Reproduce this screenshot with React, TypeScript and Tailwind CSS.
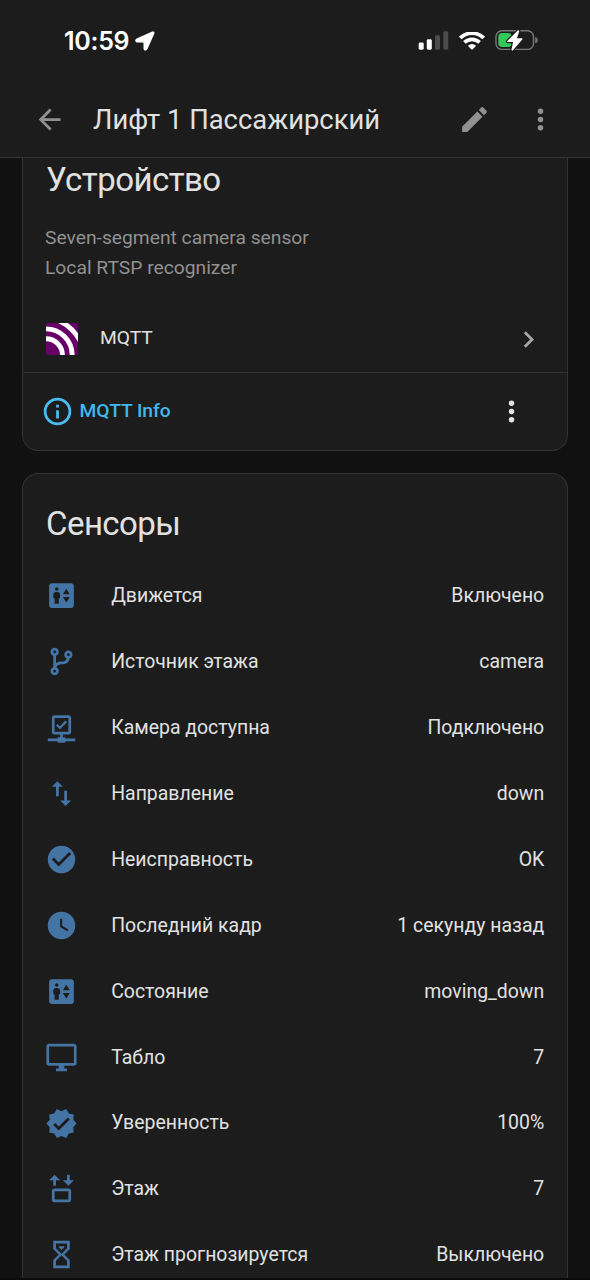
import React from "react";

const mdi = {
  back: "M20,11V13H8L13.5,18.5L12.08,19.92L4.16,12L12.08,4.08L13.5,5.5L8,11H20Z",
  pencil:
    "M20.71,7.04C21.1,6.65 21.1,6 20.71,5.63L18.37,3.29C18,2.9 17.35,2.9 16.96,3.29L15.12,5.12L18.87,8.87M3,17.25V21H6.75L17.81,9.93L14.06,6.18L3,17.25Z",
  dots: "M12,16A2,2 0 0,1 14,18A2,2 0 0,1 12,20A2,2 0 0,1 10,18A2,2 0 0,1 12,16M12,10A2,2 0 0,1 14,12A2,2 0 0,1 12,14A2,2 0 0,1 10,12A2,2 0 0,1 12,10M12,4A2,2 0 0,1 14,6A2,2 0 0,1 12,8A2,2 0 0,1 10,6A2,2 0 0,1 12,4Z",
  chevron: "M8.59,16.58L13.17,12L8.59,7.41L10,6L16,12L10,18L8.59,16.58Z",
  info: "M11,9H13V7H11M12,20C7.59,20 4,16.41 4,12C4,7.59 7.59,4 12,4C16.41,4 20,7.59 20,12C20,16.41 16.41,20 12,20M12,2A10,10 0 0,0 2,12A10,10 0 0,0 12,22A10,10 0 0,0 22,12A10,10 0 0,0 12,2M11,17H13V11H11V17Z",
  passenger:
    "M19 3H5C3.9 3 3 3.9 3 5V19C3 20.1 3.9 21 5 21H19C20.1 21 21 20.1 21 19V5C21 3.9 20.1 3 19 3M8.5 6C9.2 6 9.8 6.6 9.8 7.3S9.2 8.5 8.5 8.5 7.3 7.9 7.3 7.3 7.8 6 8.5 6M11 14H10V18H7V14H6V11.5C6 10.4 6.9 9.5 8 9.5H9C10.1 9.5 11 10.4 11 11.5V14M15.5 17L13 13H18L15.5 17M13 11L15.5 7L18 11H13Z",
  branch:
    "M13,14C9.64,14 8.54,15.35 8.18,16.24C9.25,16.7 10,17.76 10,19A3,3 0 0,1 7,22A3,3 0 0,1 4,19C4,17.69 4.83,16.58 6,16.17V7.83C4.83,7.42 4,6.31 4,5A3,3 0 0,1 7,2A3,3 0 0,1 10,5C10,6.31 9.17,7.42 8,7.83V13.12C8.88,12.47 10.16,12 12,12C14.67,12 15.56,10.66 15.85,9.77C14.77,9.32 14,8.25 14,7A3,3 0 0,1 17,4A3,3 0 0,1 20,7C20,8.34 19.12,9.5 17.91,9.86C17.65,11.29 16.68,14 13,14M7,18A1,1 0 0,0 6,19A1,1 0 0,0 7,20A1,1 0 0,0 8,19A1,1 0 0,0 7,18M7,4A1,1 0 0,0 6,5A1,1 0 0,0 7,6A1,1 0 0,0 8,5A1,1 0 0,0 7,4M17,6A1,1 0 0,0 16,7A1,1 0 0,0 17,8A1,1 0 0,0 18,7A1,1 0 0,0 17,6Z",
  network:
    "M15,20A1,1 0 0,0 14,19H13V17H17A2,2 0 0,0 19,15V5A2,2 0 0,0 17,3H7A2,2 0 0,0 5,5V15A2,2 0 0,0 7,17H11V19H10A1,1 0 0,0 9,20H2V22H9A1,1 0 0,0 10,23H14A1,1 0 0,0 15,22H22V20H15M7,15V5H17V15H7M10.8,13.5L8,10.6L9.2,9.4L10.8,11.1L14.8,6.9L16,8.2L10.8,13.5Z",
  swap: "M9,3L5,7H8V14H10V7H13M16,17V10H14V17H11L15,21L19,17H16Z",
  check:
    "M12 2C6.5 2 2 6.5 2 12S6.5 22 12 22 22 17.5 22 12 17.5 2 12 2M10 17L5 12L6.41 10.59L10 14.17L17.59 6.58L19 8L10 17Z",
  clock:
    "M12,2A10,10 0 0,0 2,12A10,10 0 0,0 12,22A10,10 0 0,0 22,12A10,10 0 0,0 12,2M16.2,16.2L11,13V7H12.5V12.2L17,14.9L16.2,16.2Z",
  monitor:
    "M21,16H3V4H21M21,2H3C1.89,2 1,2.89 1,4V16A2,2 0 0,0 3,18H10V20H8V22H16V20H14V18H21A2,2 0 0,0 23,16V4C23,2.89 22.1,2 21,2Z",
  decagram:
    "M23,12L20.56,9.22L20.9,5.54L17.29,4.72L15.4,1.54L12,3L8.6,1.54L6.71,4.72L3.1,5.53L3.44,9.21L1,12L3.44,14.78L3.1,18.47L6.71,19.29L8.6,22.47L12,21L15.4,22.46L17.29,19.28L20.9,18.46L20.56,14.78L23,12M10,17L6,13L7.41,11.59L10,14.17L16.59,7.58L18,9L10,17Z",
  elevator:
    "M7,2L11,6H8V10H6V6H3L7,2M17,10L13,6H16V2H18V6H21L17,10M7,12H17A2,2 0 0,1 19,14V20A2,2 0 0,1 17,22H7A2,2 0 0,1 5,20V14A2,2 0 0,1 7,12M7,14V20H17V14H7Z",
  sand: "M6,2H18V8L14,12L18,16V22H6V16L10,12L6,8V2M16,16.5L12,12.5L8,16.5V20H16V16.5M12,11.5L16,7.5V4H8V7.5L12,11.5M10,6H14V6.75L12,8.75L10,6.75V6Z",
};

type IconName = keyof typeof mdi;

function Icon({ name, className = "" }: { name: IconName; className?: string }) {
  return (
    <svg viewBox="0 0 24 24" className={`size-[33px] shrink-0 ${className}`} fill="currentColor" fillRule="evenodd">
      <path d={mdi[name]} />
    </svg>
  );
}

const sensors: { icon: IconName; label: string; value: string }[] = [
  { icon: "passenger", label: "Движется", value: "Включено" },
  { icon: "branch", label: "Источник этажа", value: "camera" },
  { icon: "network", label: "Камера доступна", value: "Подключено" },
  { icon: "swap", label: "Направление", value: "down" },
  { icon: "check", label: "Неисправность", value: "OK" },
  { icon: "clock", label: "Последний кадр", value: "1 секунду назад" },
  { icon: "passenger", label: "Состояние", value: "moving_down" },
  { icon: "monitor", label: "Табло", value: "7" },
  { icon: "decagram", label: "Уверенность", value: "100%" },
  { icon: "elevator", label: "Этаж", value: "7" },
  { icon: "sand", label: "Этаж прогнозируется", value: "Выключено" },
];

function StatusBar() {
  return (
    <div className="flex h-[82px] items-center pl-[64px] pr-[51px] text-white">
      <span className="w-[66px] whitespace-nowrap font-[Inter] text-[25px] font-semibold leading-none tracking-[-0.3px]">
        10:59
      </span>
      <svg viewBox="0 0 20 20" className="ml-[5px] size-5" fill="currentColor">
        <path d="M17.2.6 1.6 7.4C-.5 8.4 0 11.4 2 11.4H7.7Q8.5 11.4 8.5 12.2V17.6C8.5 20 11.4 20.3 12.4 18.2L19.3 2.8C20 1 18.9-.1 17.2.6Z" />
      </svg>
      <svg viewBox="0 0 31 20" className="ml-auto h-5 w-[31px]" fill="currentColor">
        <rect x="0.7" y="11.4" width="5" height="7.3" rx="1.4" />
        <rect x="8.8" y="8.2" width="5" height="10.5" rx="1.4" />
        <rect x="17" y="4.2" width="5" height="14.5" rx="1.4" fill="#4b4b4b" />
        <rect x="25.3" y="0.3" width="5" height="18.4" rx="1.4" fill="#4b4b4b" />
      </svg>
      <svg viewBox="0 0 26 19" className="ml-[10px] h-[19px] w-[26px]" fill="none" stroke="currentColor">
        <path d="M1.3 6C8-.4 18-.4 24.7 6" strokeWidth="3.8" />
        <path d="M5.4 10.4C9.8 6.3 16.2 6.3 20.6 10.4" strokeWidth="3.8" />
        <path d="M8.9 13.8Q13 10.3 17.1 13.8L13.8 17.2Q13 18 12.2 17.2Z" fill="currentColor" stroke="none" />
      </svg>
      <svg viewBox="0 0 44 22" className="ml-[10px] h-[22px] w-11">
        <rect x="1" y="0.8" width="37.5" height="18.6" rx="6" fill="none" stroke="#777" strokeWidth="1.4" />
        <path d="M40.2 6.9C43.6 7.9 43.6 12.3 40.2 13.3Z" fill="#777" />
        <rect x="3.3" y="3.1" width="13.5" height="14" rx="3.8" fill="#34c759" />
        <path
          d="M22.7.5 12.2 11Q11.6 12 12.8 12H18L16.5 19.4C16.4 20.7 17.2 21 18 20.2L27.3 9.4Q27.9 8.2 26.8 8.2H21.9L24.2 1.4C24.3.3 23.4-.2 22.7.5Z"
          fill="#fff"
          stroke="#1c1c1c"
          strokeWidth="2.4"
          paintOrder="stroke"
        />
      </svg>
    </div>
  );
}

function Header() {
  return (
    <header className="z-10 h-[158px] shrink-0 border-b border-[#333333] bg-[#1c1c1c]">
      <StatusBar />
      <div className="flex h-[75px] items-center px-[33px] text-[#919191]">
        <Icon name="back" />
        <h1 className="ml-[27px] grow pt-[1px] text-[27.4px] leading-[30px] text-[#e1e1e1]">Лифт 1 Пассажирский</h1>
        <Icon name="pencil" />
        <Icon name="dots" className="ml-[33px]" />
      </div>
    </header>
  );
}

export default function App() {
  return (
    <div className="flex h-[1280px] w-[590px] flex-col overflow-hidden bg-[#111111] font-[Roboto,sans-serif] text-[19.25px] text-[#e1e1e1]">
      <Header />
      <main className="flex min-h-0 grow flex-col gap-[22px] overflow-hidden px-[22px]">
        <section className="shrink-0 rounded-b-2xl border border-t-0 border-[#333333] bg-[#1c1c1c]">
          <h2 className="px-[23px] pt-[2px] text-[33px] leading-[40px] tracking-[-0.55px]">Устройство</h2>
          <div className="px-[22px] pt-[23px] leading-[30px] text-[#919191]">
            <p>Seven-segment camera sensor</p>
            <p>Local RTSP recognizer</p>
          </div>
          <div className="mt-[23px] flex h-[67px] items-center border-b border-[#333333] pl-[23px] pr-[22px]">
            <svg viewBox="0 0 33 33" className="size-8">
              <rect width="33" height="33" fill="#660066" />
              <g fill="none" stroke="#fff" strokeWidth="5">
                <path d="M0 16.2A17 17 0 0 1 17 33" />
                <path d="M0 6.1A27 27 0 0 1 27 33" />
              </g>
              <path d="M12.5 0H22.5Q29.5 5 33 10.5V19.5Q26 6.5 12.5 0Z" fill="#fff" />
            </svg>
            <span className="ml-[22px] grow pb-[1px]">MQTT</span>
            <Icon name="chevron" className="text-[#a8a8a8]" />
          </div>
          <div className="flex h-[77px] items-center pl-[18px] pr-[39px]">
            <Icon name="info" className="text-[#49bdf0]" />
            <span className="ml-[5.5px] grow font-medium tracking-[-0.05px] text-[#3fb9ec]">MQTT Info</span>
            <Icon name="dots" />
          </div>
        </section>
        <section className="shrink-0 rounded-t-2xl border border-b-0 border-[#333333] bg-[#1c1c1c]">
          <h2 className="px-[23px] pb-[19px] pt-[30px] text-[33px] leading-[40px] tracking-[-0.55px]">Сенсоры</h2>
          <ul className="text-[19.45px]">
            {sensors.map((s) => (
              <li key={s.label} className="flex h-[65.9px] items-center pl-[22.4px] pr-[22.8px]">
                <Icon name={s.icon} className="text-[#4474a3]" />
                <span className="ml-[32.8px] grow">{s.label}</span>
                <span>{s.value}</span>
              </li>
            ))}
          </ul>
        </section>
      </main>
      <div className="h-[2px] shrink-0 bg-[#0b0b0b]" />
    </div>
  );
}
